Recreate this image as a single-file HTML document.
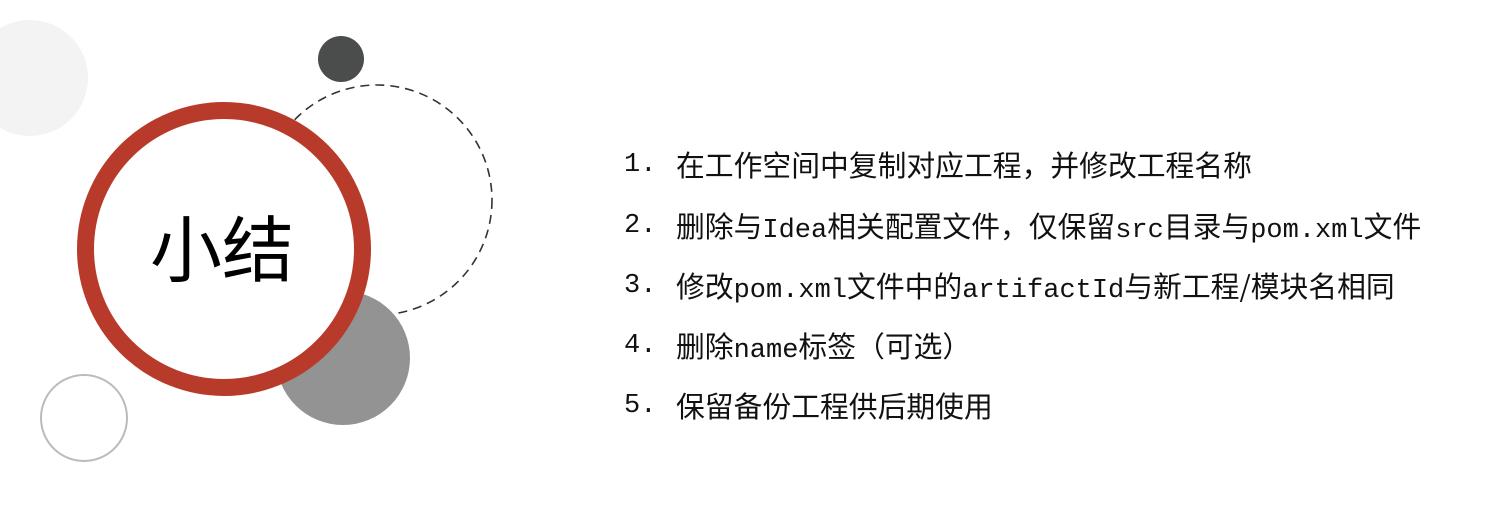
<!DOCTYPE html>
<html><head><meta charset="utf-8"><style>
body{margin:0;width:1512px;height:519px;background:#fff;overflow:hidden;position:relative;font-family:"Liberation Mono","Noto Sans CJK SC",monospace;}
.l{position:absolute;left:676px;font-size:28.8px;color:#111;white-space:nowrap;line-height:36px;font-family:"Noto Sans CJK SC",sans-serif;}
.l b{font-weight:normal;font-family:"Liberation Mono",monospace;font-size:27px;}
.n{position:absolute;left:624px;font-size:27px;color:#111;line-height:36px;font-family:"Liberation Mono",monospace;}
</style></head><body>
<svg width="520" height="519" style="position:absolute;left:0;top:0">
<circle cx="30" cy="78" r="58" fill="#f3f3f3"/>
<circle cx="341" cy="59" r="23" fill="#4a4d4c"/>
<circle cx="377" cy="200" r="115" fill="none" stroke="#333" stroke-width="1.6" stroke-dasharray="9 6"/>
<circle cx="343" cy="358" r="67" fill="#939393"/>
<circle cx="224" cy="249" r="138.5" fill="#fff" stroke="#b83a2a" stroke-width="17"/>
<circle cx="84" cy="418" r="43" fill="none" stroke="#bbb" stroke-width="2"/>
<text x="222" y="276" font-size="72" text-anchor="middle" font-family="Noto Sans CJK SC,sans-serif" fill="#000">小结</text>
</svg>
<div class="n" style="top:147px">1.</div><div class="l" style="top:147px">在工作空间中复制对应工程，并修改工程名称</div>
<div class="n" style="top:208px">2.</div><div class="l" style="top:208px">删除与<b>Idea</b>相关配置文件，仅保留<b>src</b>目录与<b>pom.xml</b>文件</div>
<div class="n" style="top:268px">3.</div><div class="l" style="top:268px">修改<b>pom.xml</b>文件中的<b>artifactId</b>与新工程/模块名相同</div>
<div class="n" style="top:328px">4.</div><div class="l" style="top:328px">删除<b>name</b>标签（可选）</div>
<div class="n" style="top:388px">5.</div><div class="l" style="top:388px">保留备份工程供后期使用</div>
</body></html>
